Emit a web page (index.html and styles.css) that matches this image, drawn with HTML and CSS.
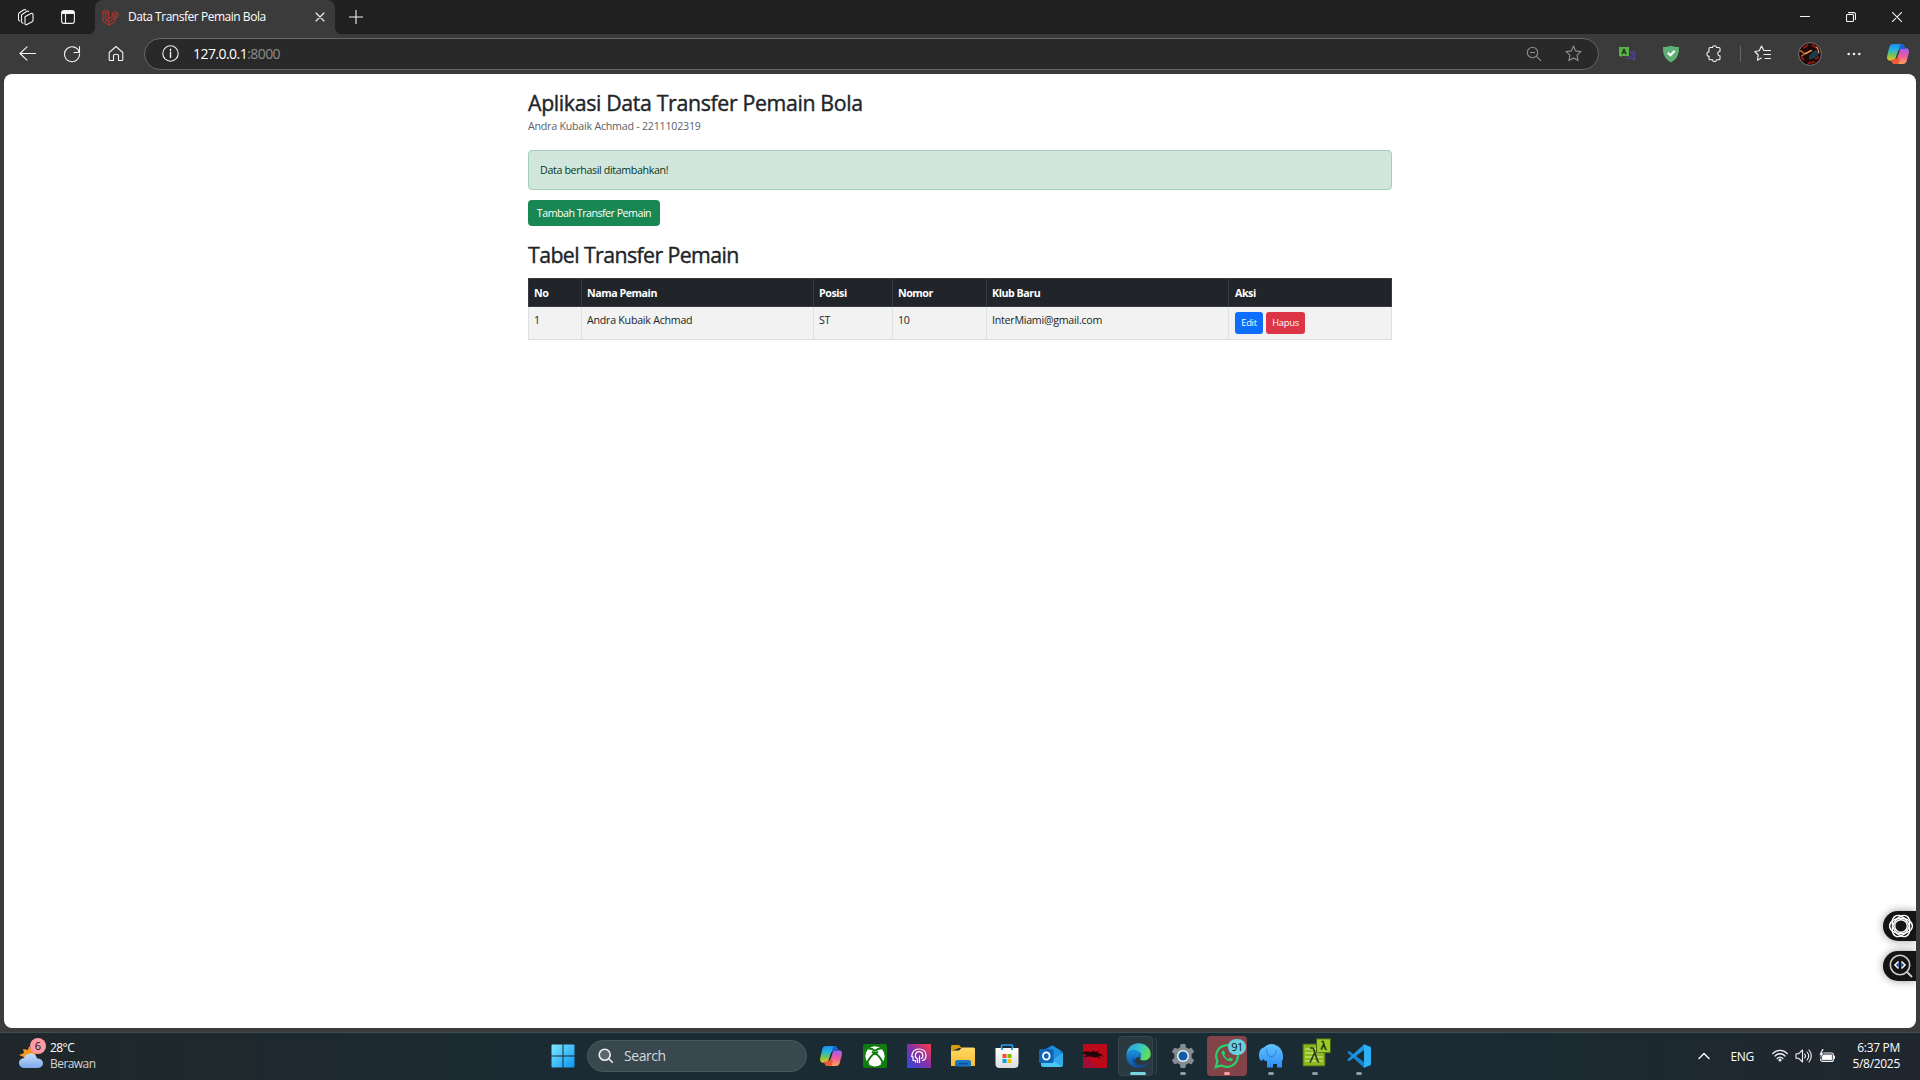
FILE: index.html
```html
<!DOCTYPE html>
<html lang="id">
<head>
<meta charset="utf-8">
<title>Data Transfer Pemain Bola</title>
<link rel="stylesheet" href="styles.css">
</head>
<body>
<svg class="defs" width="0" height="0">
  <defs>
    <linearGradient id="cpA" x1="0" y1="0" x2="0" y2="1"><stop offset="0" stop-color="#1b8cf0"/><stop offset=".35" stop-color="#25b5e0"/><stop offset=".65" stop-color="#6cc45a"/><stop offset="1" stop-color="#f5c518"/></linearGradient>
    <linearGradient id="cpB" x1="0" y1="0" x2="0" y2="1"><stop offset="0" stop-color="#a35cf5"/><stop offset=".5" stop-color="#ee5a9a"/><stop offset="1" stop-color="#fba45a"/></linearGradient>
    <linearGradient id="win" x1="0" y1="0" x2="1" y2="1"><stop offset="0" stop-color="#7deaff"/><stop offset="1" stop-color="#0a93f5"/></linearGradient>
    <linearGradient id="pr" x1="0" y1="1" x2="1" y2="0"><stop offset="0" stop-color="#2d49e0"/><stop offset=".5" stop-color="#8430a8"/><stop offset="1" stop-color="#ff3a48"/></linearGradient>
    <linearGradient id="fold" x1="0" y1="0" x2="0" y2="1"><stop offset="0" stop-color="#ffd968"/><stop offset="1" stop-color="#f8bd2c"/></linearGradient>
    <linearGradient id="store" x1="0" y1="0" x2="0" y2="1"><stop offset="0" stop-color="#fff"/><stop offset="1" stop-color="#dcdcdc"/></linearGradient>
    <linearGradient id="edgeA" x1="0" y1="0" x2="1" y2=".3"><stop offset="0" stop-color="#2f9fe0"/><stop offset=".6" stop-color="#36c5c8"/><stop offset="1" stop-color="#60e058"/></linearGradient>
    <linearGradient id="edgeB" x1="0" y1="0" x2="0" y2="1"><stop offset="0" stop-color="#1a8fe0"/><stop offset="1" stop-color="#0c52a0"/></linearGradient>
    <linearGradient id="ele" x1="0" y1="0" x2="0" y2="1"><stop offset="0" stop-color="#5ec2ff"/><stop offset="1" stop-color="#2f8ef5"/></linearGradient>
    <linearGradient id="cloud" x1="0" y1="0" x2="0" y2="1"><stop offset="0" stop-color="#c5dcfa"/><stop offset="1" stop-color="#7da9ec"/></linearGradient>
    <symbol id="copilot" viewBox="0 0 24 24">
      <path d="M7 2h8c2 0 3 1 3.600 3l.6 2h-4.500c-1.500 0-2.300.8-2.800 2.300L9.600 16c-.6 1.800-1.500 2.700-3.300 2.700H4C1.500 18.700.6 16.700 1.200 14L3.300 5.300C3.900 3 5 2 7 2z" fill="url(#cpA)"/>
      <path d="M17 22H9c-2 0-3-1-3.400-3l-.3-1.500h3.400c1.500 0 2.300-.8 2.800-2.300l2.100-6.200c.6-1.800 1.600-2.700 3.300-2.700H20c2.500 0 3.400 2 2.800 4.700l-2.100 8c-.6 2-1.700 3-3.700 3z" fill="url(#cpB)"/>
      <path d="M5.300 17.500h3.400c1.500 0 2.300-.8 2.800-2.300l.5-1.500 1.800 4.300-1.500 4H9c-2 0-3-1-3.700-4.500z" fill="#f0583a"/>
      <path d="M14.500 2c2.300 0 3.500 1 4.100 3l.6 2h-4.500c-1 0-1.800.5-2.300 1.400z" fill="#1b5fd8"/>
    </symbol>
  </defs>
</svg>

<header class="tabbar">
  <div class="tab-tools">
    <svg width="18" height="18" viewBox="0 0 18 18" class="line"><path d="M1.500 11.500V6.200c0-.7.3-1.200.9-1.500L6.500 2M4.500 13.500V7.700c0-.7.3-1.200.9-1.500L10 3.300c.7-.4 1.300-.3 1.700.2M3 4.400 7 1.800c.6-.4 1.200-.3 1.700.2M8 8.800l6-3.200c1-.5 2 0 2 1v5.600c0 .7-.3 1.200-.9 1.500l-5.100 2.700c-1 .5-2 0-2-1zM1.500 11.500c0 .8.600 1.300 1.200 1.500M4.500 13.500c0 .8.900 1.500 1.600 1.700"/></svg>
    <svg width="16" height="16" viewBox="0 0 16 16" class="line"><rect x="1.600" y="1.600" width="12.800" height="12.800" rx="2.500"/><path d="M5.500 5v9"/><path d="M2.500 2.500h11v2h-11z" fill="#fff"/></svg>
  </div>
  <div class="tab">
    <svg width="17" height="17" viewBox="0 0 17 17" fill="none" stroke="#d3322b" stroke-width=".85"><path d="M1 2.800 3.800 1.200 6.500 2.800v7L3.800 11.400M1 2.800l2.800 1.500L6.500 2.800M3.800 4.300v7.100M1 2.800v9.700l6 3.600 6-3.600V9L7 12.500v3.600M3.800 11.400 7 12.800M6.500 9.700l4.200-2.500V4.300L13.300 2.800 16 4.300v3L13.300 9l-2.600-1.600M10.700 4.300l2.600 1.500L16 4.300M13.300 5.800V9"/></svg>
    <span class="tab-title">Data Transfer Pemain Bola</span>
    <svg width="10" height="10" viewBox="0 0 10 10" class="line"><path d="m1 1 8 8M9 1 1 9"/></svg>
  </div>
  <svg class="newtab line" width="14" height="14" viewBox="0 0 14 14"><path d="M7 0v14M0 7h14"/></svg>
  <div class="winbtns">
    <svg width="10" height="10" viewBox="0 0 10 10" class="crisp"><path d="M0 4.500h10"/></svg>
    <svg width="10" height="10" viewBox="0 0 10 10" class="line"><rect x=".5" y="2.500" width="7" height="7" rx="1"/><path d="M2.500.6h5.300c1 0 1.700.7 1.700 1.700v5.200"/></svg>
    <svg width="10" height="10" viewBox="0 0 10 10" class="line"><path d="m0 0 10 10M10 0 0 10"/></svg>
  </div>
</header>

<nav class="toolbar">
  <div class="navbtns">
    <svg width="17" height="16" viewBox="0 0 17 16" class="line"><path d="M17 7.500H1M8 .8 1 7.500l7 6.700"/></svg>
    <svg width="18" height="18" viewBox="0 0 18 18" class="line"><path d="M16.300 7.500A7.500 7.500 0 1 0 16.500 9M16.500 1.500v6H11"/></svg>
    <svg width="16" height="17" viewBox="0 0 16 17" class="line"><path d="M1.200 7.500 8 1.500l6.800 6v7.300c0 .5-.3.700-.8.700h-3.500v-4.800c0-2-5-2-5 0v4.800H2c-.5 0-.8-.2-.8-.7z"/></svg>
  </div>
  <div class="address">
    <svg width="17" height="17" viewBox="0 0 17 17" class="line"><circle cx="8.500" cy="8.500" r="7.700"/><path d="M8.500 7.500v5M8.500 4.200v1.500" stroke-width="1.400"/></svg>
    <span class="url">127.0.0.1<span class="port">:8000</span></span>
    <div class="address-icons">
      <svg width="16" height="16" viewBox="0 0 16 16"><circle cx="6.500" cy="6.500" r="5.200"/><path d="M4 6.500h5M10.300 10.300l4.700 4.500"/></svg>
      <svg width="17" height="17" viewBox="0 0 17 17"><path d="m8.500 1.200 2.200 4.700 5.200.7-3.800 3.600.9 5.300-4.500-2.600L4 15.500l.9-5.300L1.100 6.600l5.200-.7z"/></svg>
    </div>
  </div>
  <div class="extensions">
    <svg width="17" height="14" viewBox="0 0 17 14"><path d="M9 4.500h6.500v7H15v1.500l-2-1.500H8V9" fill="none" stroke="#54428f" stroke-width="1.200"/><path d="M11 6.500h2.500v3H10" fill="none" stroke="#54428f"/><path d="M0 0h10v9H3L1.500 10.500V9H0z" fill="#5cb14c"/><path d="m3 7.300 1.700-5h.6l1.700 5M3.700 5.500h2.600" fill="none" stroke="#1f3d1a" stroke-width="1.300"/></svg>
    <svg width="18" height="18" viewBox="0 0 18 18"><path d="M9 .8C11.500 1.700 14 2 17 2c.2 7-1.500 12-8 15.500C2.500 14 .8 9 1 2c3 0 5.500-.3 8-1.200z" fill="#5fb074"/><path d="m5.800 7.800 2.600 2.500 4.300-4.600" fill="none" stroke="#fff" stroke-width="2"/></svg>
    <svg width="16" height="17" viewBox="0 0 16 17" class="line"><path d="M4 2.500h2.500c0-2.400 4-2.400 4 0H13q1 0 1 1v3c-3-.3-3 4.500 0 4.200v3q0 1-1 1h-2.500c0 2.400-4 2.400-4 0H4q-1 0-1-1v-2.500c-2.800.2-2.800-4.600 0-4.400V3.500c0-.6.400-1 1-1z"/></svg>
    <i class="divider"></i>
    <svg width="17" height="17" viewBox="0 0 17 17" class="line"><path d="M11 5.500H9.800L7.500 1 5.300 5.700.8 6.500l3.400 3.500-.8 5.300 4-2.300M11 5.500h5.500M10 9.500h6.500M11 13.500h5.500"/></svg>
    <svg width="24" height="24" viewBox="0 0 24 24"><circle cx="12" cy="12" r="11.400" fill="#1b0807" stroke="#777" stroke-width="1"/><path d="M5 6l5-3M14 3l5 3M3 15l3 3M10 21l7-1M17 17l4-2" stroke="#8a1a10" stroke-width="2.200"/><path d="M2 9c2-1 3 3 5 3s3-3 6-3M3 14c2 0 3-2 5-3" fill="none" stroke="#c0602c" stroke-width="1.500"/><path d="M11 13c3-1 4-5 7-5l4 3-5 5-6 2z" fill="#183c4a"/><path d="M7 11.500c3 0 4-3 7-3M18 5c3 1 2 4 3 6" stroke="#f09a4c" fill="none" stroke-width="1.300"/></svg>
    <svg width="14" height="4" viewBox="0 0 14 4" fill="#eee"><circle cx="1.700" cy="2" r="1.300"/><circle cx="7" cy="2" r="1.300"/><circle cx="12.300" cy="2" r="1.300"/></svg>
    <svg width="24" height="24"><use href="#copilot"/></svg>
  </div>
</nav>

<div class="viewport">
  <main class="container">
    <h2 class="title">Aplikasi Data Transfer Pemain Bola</h2>
    <p class="subtitle">Andra Kubaik Achmad - 2211102319</p>
    <div class="alert">Data berhasil ditambahkan!</div>
    <a class="btn btn-success">Tambah Transfer Pemain</a>
    <h2 class="title table-title">Tabel Transfer Pemain</h2>
    <table class="table">
      <colgroup><col class="c-no"><col class="c-name"><col class="c-pos"><col class="c-num"><col class="c-club"><col></colgroup>
      <thead><tr><th>No</th><th>Nama Pemain</th><th>Posisi</th><th>Nomor</th><th>Klub Baru</th><th>Aksi</th></tr></thead>
      <tbody><tr><td>1</td><td>Andra Kubaik Achmad</td><td>ST</td><td>10</td><td>InterMiami@gmail.com</td><td><div class="actions"><a class="btn btn-sm btn-primary">Edit</a><a class="btn btn-sm btn-danger">Hapus</a></div></td></tr></tbody>
    </table>
  </main>
  <aside class="floaters">
    <div class="floater"><svg width="26" height="26" viewBox="0 0 26 26" fill="none" stroke="#fff" stroke-width="1.400"><ellipse cx="13" cy="13" rx="11.400" ry="7.800"/><ellipse cx="13" cy="13" rx="11.400" ry="7.800" transform="rotate(60 13 13)"/><ellipse cx="13" cy="13" rx="11.400" ry="7.800" transform="rotate(120 13 13)"/><circle cx="13" cy="13" r="6.300"/></svg></div>
    <div class="floater"><svg width="26" height="26" viewBox="0 0 26 26" fill="none" stroke="#ccc" stroke-width="1.600"><circle cx="12" cy="12" r="9.700"/><path d="m18.500 18.500 5.500 5.500" stroke-width="2"/><path d="m10.500 8.500-3.500 3.500 3.500 3.500" stroke="#fff"/><path d="m13.500 8.500 3.500 3.500-3.500 3.500" stroke="#fff"/><path d="M10.200 10v4M13.800 10v4" stroke="#2f7df0" stroke-width="1.300"/></svg></div>
  </aside>
</div>

<footer class="taskbar">
  <div class="weather">
    <div class="weather-icon">
      <svg width="26" height="28" viewBox="0 0 26 28"><path d="m11 5 2.500 4 4-1v12H5l1-4-5-2 5-2-1-4 5 1z" fill="#f59a23"/><path d="M7 27c-3.500 0-6-2-6-5s2.300-4.800 5-4.800C7 14 9.700 12.500 12.500 12.500c3.500 0 6 2 6.500 5 3.500 0 6 1.800 6 4.800S22.500 27 19.500 27z" fill="url(#cloud)"/></svg>
      <span class="weather-badge">6</span>
    </div>
    <div class="weather-text"><span>28°C</span><span class="dim">Berawan</span></div>
  </div>
  <div class="apps">
    <div class="app"><svg width="24" height="24" viewBox="0 0 24 24" fill="url(#win)"><path d="M.5 1.500q0-1 1-1H11.500v11H.5zM12.500.5h10q1 0 1 1v10h-11zM.5 12.500h11v11h-10q-1 0-1-1zM12.500 12.500h11v10q0 1-1 1h-10z"/></svg></div>
    <div class="search"><svg width="16" height="16" viewBox="0 0 16 16" fill="#5b666c" stroke="#eee" stroke-width="1.600"><circle cx="6.700" cy="6.700" r="5.500"/><path d="m10.800 10.800 4 4"/></svg><span>Search</span></div>
    <div class="app"><svg width="24" height="24"><use href="#copilot"/></svg></div>
    <div class="app"><svg width="24" height="24" viewBox="0 0 24 24"><rect width="24" height="24" rx="2" fill="#107c10"/><circle cx="12" cy="12" r="9.700" fill="#fff"/><path d="M5.300 4.800C7 4 9.500 5 12 6.800 14.500 5 17 4 18.700 4.800M4 19.500C5.500 15 8.500 11.500 12 8.800c3.500 2.700 6.500 6.200 8 10.700M9 7.500 12 10l3-2.500" fill="none" stroke="#107c10" stroke-width="2"/><path d="M12 13c-3 2.500-5 5-6 7.500C10 23 14 23 18 20.500c-1-2.500-3-5-6-7.500z" fill="#fff"/></svg></div>
    <div class="app"><svg width="24" height="24" viewBox="0 0 24 24"><path d="M0 0h24v24H0z" fill="url(#pr)"/><path d="M8.500 18.500V16.500H6V13L4.700 12.500C5 8 7.500 5 12 5c4 0 7 2.500 7 6.300 0 3.500-1.500 5.200-4 5.200M10.500 19v-4c-3.500-2-2.500-7.300 1.500-7.300s5.200 5.300 2 7M12.500 19v-7.500" fill="none" stroke="#fff" stroke-width="1.200"/></svg></div>
    <div class="app"><svg width="24" height="24" viewBox="0 0 24 24"><path d="M0 2.500Q0 1 1.500 1H8l3 3h-3L0 7z" fill="#d99a12"/><path d="M0 6.500h8L11 3.500h11.500Q24 3.500 24 5v17H0z" fill="url(#fold)"/><path d="M4 22.500v-4Q4 16 6.500 16h11q2.500 0 2.500 2.500v4z" fill="#1677c9"/><path d="M7.500 19h9v1.500h-9z" fill="#0b4f94"/></svg></div>
    <div class="app"><svg width="24" height="24" viewBox="0 0 24 24"><path d="M6.500 6V1.800Q6.500 1 7.300 1h9.400q.8 0 .8.800V6" fill="none" stroke="#2ba4ee" stroke-width="1.700"/><path d="M.5 4h23v16q0 4-4 4h-15q-4 0-4-4z" fill="url(#store)"/><path d="M7.500 10h4v4h-4z" fill="#f25022"/><path d="M12.500 10h4v4h-4z" fill="#7fba00"/><path d="M7.500 15h4v4h-4z" fill="#00a4ef"/><path d="M12.500 15h4v4h-4z" fill="#ffb900"/><path d="M6 4h2v2H6zM16 4h2v2h-2z" fill="#2ba4ee"/></svg></div>
    <div class="app"><svg width="24" height="24" viewBox="0 0 24 24"><path d="m2 7 11.500-6L24 8v8L13 22 2 16z" fill="#1669b8"/><path d="M6 6 13.500 2 22 7v7H6z" fill="#2190dd"/><path d="M2 13v7.500Q2 23 4.500 23h17q2.500 0 2.500-2.500V9l-9 6z" fill="#49c6f5"/><path d="m24 9-11 7 10 6.500 1-2z" fill="#35a8ea"/><rect y="5" width="14.500" height="14" rx="1.500" fill="#0f64b5"/><ellipse cx="7.300" cy="12" rx="3.300" ry="3.700" fill="none" stroke="#fff" stroke-width="1.800"/></svg></div>
    <div class="app"><svg width="24" height="24" viewBox="0 0 24 24"><path d="M0 0h24v24H0z" fill="#bd0a1b"/><path d="M0 12c5 1 8 5 12 12H0z" fill="#a00d36"/><path d="M0 8c4-1 7 0 10 0L8.500 6l4.500 2 3-2-1.500 2.500L18 10l2.500 3-3.500-1.500-1.500.5 3 3.500-4-2.500-2.500.5-5-1L0 13l4-2.500L0 10z" fill="#210609"/></svg></div>
    <div class="app edge"><svg width="25" height="25" viewBox="0 0 24 24"><path d="M.5 12C.5 5 5.500.3 12 .3S23.700 5 23.700 10.500c0 4-3 6.200-6.500 6.200-3 0-4.200-1.200-3.300-2.600 1.300-2.200.6-5.800-3.400-6C6 8 1 9 .5 12z" fill="url(#edgeA)"/><path d="M.5 11.500C1.500 7.300 5.500 6 9 6.700c4 .8 5.800 4 5 7.200-2.500-1.400-6 .3-5.500 4.300.3 2.300 2 4.500 4.500 5.600C5.500 24.500-.2 18.500.5 11.500z" fill="url(#edgeB)"/><path d="M8.500 16c0 6 7.500 6.500 13.500 2.200C19.500 22 16 24 12.800 23.700c-5-1.400-7-5-6-9.700z" fill="#17498f"/></svg><i class="run active"></i></div>
    <div class="app"><svg width="24" height="24" viewBox="0 0 24 24"><path d="M9.700 0h4.600l.8 3.400 2.300 1.300 3.300-1 2.400 4-2.500 2.500v3.600l2.500 2.500-2.400 4-3.300-1-2.300 1.300-.8 3.400H9.700l-.8-3.400-2.300-1.300-3.300 1-2.400-4 2.500-2.500v-3.600L.9 7.700l2.400-4 3.300 1 2.300-1.300z" fill="#858c92"/><circle cx="12" cy="12" r="6" fill="#f0f0f0"/><circle cx="12" cy="12" r="4.500" fill="#0e5ba8"/></svg><i class="run"></i></div>
    <div class="app alerting"><svg width="26" height="26" viewBox="0 0 24 24" fill="none" stroke="#25d366" stroke-width="2"><path d="m1.600 22.300 1.600-5.500A10 10 0 1 1 7 20.700z"/><path d="M7.300 8c-.8 3.500 5 9.500 8.500 8.800 1.500-.3 1.700-1.700 1.500-2.300l-2.500-1.200-1.300 1.500c-2-.8-3.300-2-4.100-3.800L10.300 9.700 9.200 7C8.200 6.800 7.500 7.300 7.300 8z" fill="#25d366" stroke="none"/></svg><span class="badge">91</span><i class="run"></i></div>
    <div class="app"><svg width="24" height="24" viewBox="0 0 24 24"><path d="M0 11C0 7 2 4 5 3.500c3-3.500 8-4.500 12-2.300 4.500 2 7 6 7 11.300V17l-1-2v8.500H18V20h-4v3.500H8V17C5 17 4.500 15.500 4.500 14c0 2-1.500 3-2.700 2.500S-.2 13.500 0 11z" fill="url(#ele)"/><path d="M8 4.500c-1 5 1 9 5 8 3-.7 4-3 3.700-6" fill="none" stroke="#2378d2" stroke-width=".8"/></svg><i class="run"></i></div>
    <div class="app"><svg class="lambda" width="30" height="30" viewBox="0 0 30 30"><path d="M1 6h22v22H1z" fill="#8db81c" stroke="#45611a"/><path d="M3 11h18M3 15h18M3 19h18M3 23h18" stroke="#c3dd70" stroke-width="1.500"/><path d="M14.500.8h14v14h-14z" fill="#9acb22" stroke="#45611a"/><path d="M8 10h2.500c1 0 1.300 1 1.700 2.500l3 9.500c.3 1.300 1 2 2 1.500M12.500 15 8 24.500M19.500 3.500h1.500l2.300 7c.3.800.7 1 1.500.7M21.700 6.500l-2.500 5" fill="none" stroke="#283b16" stroke-width="1.700"/></svg><i class="run"></i></div>
    <div class="app"><svg width="24" height="24" viewBox="0 0 24 24"><path d="m17 .2 7 3v17.600l-7 3L1 9.200l-.7-.9 1.700-1.600L17 18z" fill="#1681cd"/><path d="M17 .2v5.800L2 17.300.3 15.700z" fill="#1e95e0"/><path d="m17 .2 7 3v17.600l-7 3z" fill="#2fb0f5"/></svg><i class="run"></i></div>
  </div>
  <div class="tray">
    <svg width="12" height="8" viewBox="0 0 12 8" class="line"><path d="m1 6.500 5-5 5 5" stroke-width="1.500"/></svg>
    <span class="lang">ENG</span>
    <div class="status">
      <svg width="16" height="13" viewBox="0 0 16 13" class="line"><path d="M.8 4.500c4-4.300 10.400-4.300 14.400 0M3 7c2.800-3 7.200-3 10 0M5.200 9.500c1.700-1.800 3.900-1.800 5.600 0" stroke-width="1.300"/><circle cx="8" cy="11" r="1" fill="#fff"/></svg>
      <svg width="17" height="14" viewBox="0 0 17 14" class="line"><path d="M1 4.800h2.500L7.500 1v12L3.500 9.200H1zM9.700 5c1 1.200 1 2.800 0 4M12 3c2.200 2.500 2.200 5.500 0 8M14 1c3 3.500 3 8.500 0 12"/></svg>
      <svg width="17" height="14" viewBox="0 0 17 14" class="line"><rect x="1.600" y="4" width="12.800" height="8.500" rx="2"/><path d="M4 6h8.700v4.700H3.300V8z" fill="#fff"/><path d="M15 6.700h1v3h-1z" fill="#fff" stroke="none"/><path d="M3 0 0 6h2L1 10l4-6H3l2-4z" fill="#fff" stroke="#1d272d" stroke-width=".6"/></svg>
    </div>
    <div class="clock"><span>6:37 PM</span><span>5/8/2025</span></div>
  </div>
</footer>
</body>
</html>
```
FILE: styles.css
```css
* { box-sizing: border-box; }
body {
  margin: 0;
  width: 1920px;
  height: 1080px;
  overflow: hidden;
  display: flex;
  flex-direction: column;
  background: #3b3b3b;
  font-family: "Open Sans", "Noto Sans", sans-serif;
  color: #fff;
}
svg { display: block; flex: none; }
.defs { position: absolute; }
.line, .crisp { fill: none; stroke: #f2f2f2; stroke-width: 1.1; stroke-linecap: round; stroke-linejoin: round; }
.crisp { shape-rendering: crispEdges; stroke-width: 1; }

/* Tab strip */
.tabbar { height: 34px; flex: none; background: #202020; display: flex; align-items: center; }
.tab-tools { width: 95px; display: flex; gap: 25px; padding-left: 17px; align-items: center; }
.tab {
  position: relative;
  width: 240px;
  height: 34px;
  background: #3b3b3b;
  border-radius: 8px 8px 0 0;
  display: flex;
  align-items: center;
  padding: 0 10px 0 7px;
}
.tab::before, .tab::after { content: ""; position: absolute; bottom: 0; width: 7px; height: 7px; }
.tab::before { left: -7px; background: radial-gradient(circle at 0 0, #202020 7px, #3b3b3b 7.500px); }
.tab::after { right: -7px; background: radial-gradient(circle at 100% 0, #202020 7px, #3b3b3b 7.500px); }
.tab-title { flex: 1; margin-left: 9px; padding-bottom: 1px; font-size: 12px; letter-spacing: -0.47px; white-space: nowrap; }
.newtab { margin-left: 14px; }
.winbtns { margin-left: auto; display: flex; gap: 36px; padding-right: 18px; }

/* Toolbar */
.toolbar { height: 40px; flex: none; display: flex; align-items: center; padding-bottom: 1px; }
.navbtns { display: flex; align-items: center; gap: 27px; width: 144px; padding-left: 19px; }
.address {
  width: 1455px;
  height: 32px;
  margin-bottom: -1px;
  border: 1px solid #676767;
  border-radius: 16px;
  background: #292929;
  display: flex;
  align-items: center;
  padding: 0 16px 1px 17px;
}
.url { margin-left: 14px; padding-bottom: 1px; font-size: 14px; letter-spacing: -0.55px; }
.port { color: #8e8e8e; }
.address-icons { margin-left: auto; display: flex; gap: 23px; align-items: center; fill: none; stroke: #8f8f8f; stroke-width: 1.1; }
.extensions { flex: 1; display: flex; align-items: center; justify-content: space-between; padding: 0 10px 0 19px; }
.extensions svg:nth-child(-n+3) { margin-left: 1px; margin-right: -1px; }
.extensions svg:nth-child(3) { margin-left: 2px; margin-right: -2px; }
.extensions svg:nth-child(6), .extensions svg:nth-child(7) { margin-left: 1px; margin-right: -1px; }
.divider { width: 1px; height: 16px; background: #666; margin: 0 -12px 0 -6px; }

/* Web page */
.viewport { position: relative; margin: 0 4px; height: 954px; flex: none; background: #fff; border-radius: 8px; overflow: hidden; color: #212529; }
.container { width: 864px; margin-left: 524px; padding-top: 16px; font-size: 10.667px; line-height: 16px; letter-spacing: -0.25px; }
.title { margin: 0; font-size: 21.333px; font-weight: 500; line-height: 26px; letter-spacing: -0.36px; -webkit-text-stroke: 0.4px currentColor; }
.subtitle { margin: 2px 0 16px; color: #5d6266; letter-spacing: -0.23px; }
.alert { height: 40px; margin-bottom: 10px; padding: 11px; border: 1px solid #a3cfbb; border-radius: 4px; background: #d1e7dd; color: #0a3622; letter-spacing: -0.35px; }
.btn { display: inline-flex; align-items: center; justify-content: center; border-radius: 4px; color: #fff; }
.btn-success { width: 132px; height: 26px; background: #198754; letter-spacing: -0.5px; }
.table-title { margin: 16px 0 10px; letter-spacing: -0.6px; }
.table { width: 864px; border-collapse: collapse; table-layout: fixed; }
.c-no { width: 53px; }
.c-name { width: 232px; }
.c-pos { width: 79px; }
.c-num { width: 94px; }
.c-club { width: 242px; }
.table th { height: 28px; padding: 0 5px; background: #212529; border: 1px solid #373b3e; color: #fff; text-align: left; font-weight: 700; letter-spacing: -0.45px; }
.table td { height: 33px; padding: 5px 5px 0; vertical-align: top; background: #f2f2f2; border: 1px solid #dee2e6; }
.table th:last-child, .table td:last-child { padding-left: 6px; }
.actions { display: flex; gap: 3px; }
.btn-sm { height: 22px; border-radius: 3px; font-size: 9.333px; }
.btn-primary { width: 28px; background: #0d6efd; }
.btn-danger { width: 39px; background: #dc3545; }
.floaters { position: absolute; right: 0; top: 837px; display: flex; flex-direction: column; gap: 10px; }
.floater { width: 33px; height: 30px; padding: 2px 0 0 5px; background: #141414; border-radius: 15px 0 0 15px; box-shadow: 0 0 8px #0006; }

/* Taskbar */
.taskbar {
  height: 48px;
  margin-top: 4px;
  padding-bottom: 2px;
  flex: none;
  display: flex;
  align-items: center;
  border-top: 1px solid #3d4d52;
  background: linear-gradient(90deg, #20272a, #1b2b33 30%, #1a2b33 75%, #20262e);
}
.weather { width: 541px; padding-left: 18px; display: flex; gap: 6px; align-items: center; font-size: 12px; line-height: 16px; }
.weather-icon { position: relative; top: -1px; }
.weather-badge { position: absolute; left: 12px; top: -3px; width: 16px; height: 16px; border-radius: 8px; background: #ff99a4; color: #111; text-align: center; font-size: 11px; }
.weather-text { display: flex; flex-direction: column; letter-spacing: -0.55px; }
.dim { color: #d2d4d5; }
.apps { display: flex; align-items: center; }
.app { position: relative; width: 44px; height: 40px; display: flex; align-items: center; justify-content: center; }
.search { width: 220px; height: 32px; margin: 0 2px 0 2px; padding-left: 10px; border: 1px solid #4b585e; border-radius: 16px; background: #39474e; display: flex; align-items: center; gap: 9px; color: #d5d9db; font-size: 14px; letter-spacing: -0.45px; }
.search span { margin-left: 1px; }
.edge::before { content: ""; position: absolute; inset: 0 8px 0 1px; border: 1px solid #38464c; border-radius: 4px; background: #2b3940; box-shadow: 4px 0 0 -1px #1d2e35, 5px 0 0 -1px #34444a; }
.edge svg { position: relative; left: -1px; }
.alerting { width: 40px; margin: 0 2px; border-radius: 4px; background: #834449; }
.run { position: absolute; left: calc(50% - 3px); bottom: 1px; width: 6px; height: 3px; border-radius: 2px; background: #929a9e; }
.run.active { left: 13px; width: 16px; background: #75d5df; }
.alerting .run { background: #ff99a4; }
.badge { position: absolute; right: 1px; top: 3px; width: 18px; height: 16px; border-radius: 8px; background: #68d0dc; color: #111; font-size: 11px; line-height: 16px; text-align: center; letter-spacing: -0.5px; }
.lambda { margin: -6px -4px 0 0; }
.tray { margin-left: auto; display: flex; align-items: center; padding-right: 20px; font-size: 12px; line-height: 16px; letter-spacing: -0.3px; }
.lang { margin: 2px 18px 0 20px; }
.status { display: flex; gap: 7px; align-items: center; }
.clock { width: 64px; display: flex; flex-direction: column; text-align: right; }
```
